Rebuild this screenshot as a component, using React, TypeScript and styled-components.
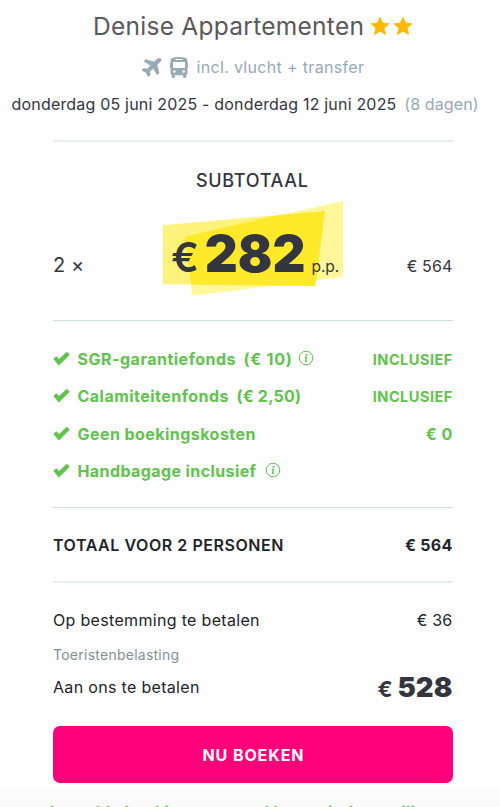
import React from 'react';
import styled, { createGlobalStyle } from 'styled-components';

const GlobalStyle = createGlobalStyle`
  * { box-sizing: border-box; }
  html, body { margin: 0; background: #fefefe; overflow: hidden; }
  body { font-family: Inter, sans-serif; font-size: 16px; color: #33363f; }
`;

const Page = styled.main`
  width: 500px;
  height: 807px;
  overflow: hidden;
  display: flex;
  flex-direction: column;
  background: linear-gradient(#fefefe 780px, #fafafa 807px);
  white-space: nowrap;
  > * { flex: none; }
`;

const Text = styled.span<{ $size?: number; $weight?: number; $track?: number; $color?: string }>`
  font-size: ${p => p.$size ?? 16}px;
  font-weight: ${p => p.$weight ?? 400};
  letter-spacing: ${p => p.$track ?? 0}px;
  margin-right: ${p => -(p.$track ?? 0)}px;
  color: ${p => p.$color ?? 'inherit'};
`;

const Title = styled.h1`
  display: flex;
  align-items: center;
  height: 52px;
  margin: 0;
  padding-left: 93px;
  gap: 6px;
  font-weight: 400;
  color: #5b585c;
`;

const Stars = styled.div`
  display: flex;
  gap: 3px;
  svg { display: block; }
`;

const Transport = styled.div`
  display: flex;
  align-items: center;
  height: 30px;
  padding-left: 141px;
  color: #98abb5;
  svg { display: block; flex: none; }
`;

const PlaneSlot = styled.span`
  width: 29px;
`;

const BusSlot = styled.span`
  width: 26.5px;
`;

const Dates = styled.div`
  display: flex;
  align-items: center;
  gap: 8px;
  height: 43px;
  padding-left: 11.5px;
`;

const Summary = styled.section`
  width: 400px;
  margin: 15px 0 0 53px;
  display: flex;
  flex-direction: column;
`;

const Divider = styled.hr<{ $soft?: boolean }>`
  width: 100%;
  border: 0;
  margin: 0;
  flex: none;
  height: ${p => (p.$soft ? 2 : 1)}px;
  background: ${p => (p.$soft ? '#e5eff4' : '#cde1e8')};
`;

const Subtotal = styled.h2`
  display: flex;
  align-items: center;
  height: 76px;
  margin: 0;
  padding-left: 143px;
  font-weight: 500;
`;

const PriceRow = styled.div`
  display: grid;
  grid-template-columns: 110px 180px 1fr;
  align-items: baseline;
  height: 102px;
  line-height: 72px;
`;

const Amount = styled.div`
  text-align: right;
  padding-right: 0.7px;
`;

const PriceTag = styled.div`
  position: relative;
  display: flex;
  align-items: baseline;
  padding-left: 8px;
`;

const Digits = styled.span`
  margin: 0 6px;
`;

const Marker = styled.svg`
  position: absolute;
  left: 0;
  top: -17px;
  z-index: -1;
`;

const PriceLayer = styled.div`
  position: relative;
  z-index: 0;
`;

const Benefits = styled.ul`
  list-style: none;
  margin: 0;
  padding: 19px 0 17px;
  color: #5fc34c;
`;

const Benefit = styled.li`
  display: flex;
  align-items: center;
  height: 37.5px;
  svg { display: block; flex: none; }
`;

const CheckSlot = styled.span`
  width: 24.5px;
`;

const Extra = styled.span`
  margin-left: 8px;
`;

const InfoSlot = styled.span<{ $gap: number }>`
  margin: -2px 0 0 ${p => p.$gap}px;
`;

const Row = styled.div<{ $height: number }>`
  display: flex;
  align-items: center;
  justify-content: space-between;
  height: ${p => p.$height}px;
  padding-right: 0.7px;
  color: #22242a;
`;

const End = styled.span`
  margin-left: auto;
  padding-right: 0.7px;
`;

const Payments = styled.div`
  padding-top: 21px;
`;

const Due = styled.span`
  display: flex;
  align-items: baseline;
  gap: 5px;
  color: #33363f;
`;

const BookButton = styled.button`
  width: 400px;
  height: 57px;
  margin: 26px 0 0 0;
  border: 0;
  border-radius: 7px;
  background: #ff007b;
  color: #fff;
  font-family: inherit;
`;

const Footnote = styled.p`
  margin: 19px 0 0;
  height: 20px;
  line-height: 20px;
  padding-left: 50px;
  color: #5fc34c;
`;

const Star = () => (
  <svg width="20" height="20" viewBox="0 0 24 24" fill="#fcb900" stroke="#fcb900" strokeWidth="1" strokeLinejoin="round">
    <path d="M12 1.6 15 8.5l7.7.8-5.7 5.2 1.6 7.6L12 18.2l-6.6 3.9L7 14.5 1.3 9.3 9 8.5z" />
  </svg>
);

const Plane = () => (
  <svg width="21" height="21" viewBox="0 0 21 21" fill="currentColor" stroke="currentColor" strokeWidth="0.6" strokeLinejoin="round">
    <path d="M20 2c-1.200-1.100-3-.6-4.100.4l-2.900 2.500-8.200-2.400L3 4.300l6.700 4.200-3.400 3.600-3.900-.5L.8 13.200l4.300 2.300 2.300 4.200 1.700-1.600-.4-3.700 3.500-3.200 4 6.600 1.900-1.800-2.200-8.200 2.900-2.700C20 4 20.500 2.800 20 2z" />
  </svg>
);

const Bus = () => (
  <svg width="18" height="21" viewBox="0 0 18 21" fill="currentColor" fillRule="evenodd">
    <path d="M9 0C4 0 .5 1 .5 3.800V16c0 1.100.5 1.700 1.200 2v1.800c0 .7.500 1.200 1.200 1.200h.8c.7 0 1.200-.5 1.200-1.200v-1.600h8.200v1.600c0 .7.500 1.200 1.200 1.200h.8c.7 0 1.200-.5 1.200-1.200V18c.7-.3 1.200-.9 1.200-2V3.800C17.500 1 14 0 9 0zM5.500 1.900h7v1h-7zM3 5h12v6H3zM4.400 13.200a1.300 1.300 0 1 1 0 2.600 1.300 1.300 0 0 1 0-2.600zm9.200 0a1.300 1.300 0 1 1 0 2.600 1.300 1.300 0 0 1 0-2.600zM0 6h.5v5H0zM17.500 6h.5v5h-.5z" />
  </svg>
);

const Check = () => (
  <svg width="17" height="16" viewBox="0 0 17 16" fill="currentColor">
    <path d="M.3 8 3.300 5.200l2.800 2.900L13.800.7 16.800 3.700 5.900 14.400z" />
  </svg>
);

const Info = () => (
  <svg width="16" height="16" viewBox="0 0 16 16" fill="none" stroke="currentColor">
    <circle cx="8" cy="8" r="6.800" strokeWidth="1" />
    <circle cx="8.500" cy="4.900" r="1" fill="currentColor" stroke="none" />
    <path d="M6.700 7.300h1.700l-.9 3.800h1.700" strokeWidth="1.300" />
  </svg>
);

interface BenefitItem {
  label: string;
  track: number;
  extra?: string;
  extraTrack?: number;
  infoGap?: number;
  value?: string;
  valueSize?: number;
}

const benefits: BenefitItem[] = [
  { label: 'SGR-garantiefonds', track: 0.5, extra: '(€ 10)', extraTrack: 0.75, infoGap: 6.5, value: 'INCLUSIEF', valueSize: 14.5 },
  { label: 'Calamiteitenfonds', track: 0.48, extra: '(€ 2,50)', extraTrack: 0.2, value: 'INCLUSIEF', valueSize: 14.5 },
  { label: 'Geen boekingskosten', track: 0.45, value: '€ 0', valueSize: 16 },
  { label: 'Handbagage inclusief', track: 0.4, infoGap: 9.5 },
];

export default function App() {
  return (
    <Page>
      <GlobalStyle />
      <Title>
        <Text $size={24.5} $track={0.27}>Denise Appartementen</Text>
        <Stars><Star /><Star /></Stars>
      </Title>
      <Transport>
        <PlaneSlot><Plane /></PlaneSlot>
        <BusSlot><Bus /></BusSlot>
        <Text $track={0.33} $color="#94aab8">incl. vlucht + transfer</Text>
      </Transport>
      <Dates>
        <Text $track={0.19}>donderdag 05 juni 2025 - donderdag 12 juni 2025</Text>
        <Text $track={0.1} $color="#94aab8">(8 dagen)</Text>
      </Dates>
      <Summary>
        <Divider $soft />
        <Subtotal><Text $size={18} $weight={500} $track={0.7}>SUBTOTAAL</Text></Subtotal>
        <PriceLayer>
          <PriceRow>
            <Text $size={20} $track={0.1}>2 ×</Text>
            <PriceTag>
              <Marker width="180" height="95" viewBox="0 0 180 95">
                <path d="M0 24.300 162 10 152 85 0 83.300z" fill="#fdf27a" />
                <path d="M21.500 35.700 180 0v75.700L29.300 94.700z" fill="#fff79a" />
                <path d="M21.500 35.700 113.900 14.250 162 10 153.300 79.100 152 85 106.300 84.500 28.200 83.600z" fill="#ffe92b" />
              </Marker>
              <Text $size={41} $weight={600}>€</Text>
              <Digits><Text $size={51} $weight={900}>282</Text></Digits>
              <Text $size={15.5}>p.p.</Text>
            </PriceTag>
            <Amount><Text $track={0.1}>€ 564</Text></Amount>
          </PriceRow>
        </PriceLayer>
        <Divider />
        <Benefits>
          {benefits.map(b => (
            <Benefit key={b.label}>
              <CheckSlot><Check /></CheckSlot>
              <Text $weight={700} $track={b.track}>{b.label}</Text>
              {b.extra && <Extra><Text $weight={700} $track={b.extraTrack}>{b.extra}</Text></Extra>}
              {b.infoGap && <InfoSlot $gap={b.infoGap}><Info /></InfoSlot>}
              {b.value && <End><Text $size={b.valueSize} $weight={700} $track={0.5}>{b.value}</Text></End>}
            </Benefit>
          ))}
        </Benefits>
        <Divider />
        <Row $height={73}>
          <Text $weight={600} $track={0.55}>TOTAAL VOOR 2 PERSONEN</Text>
          <Text $weight={700} $track={0.3}>€ 564</Text>
        </Row>
        <Divider $soft />
        <Payments>
          <Row $height={31}>
            <Text $track={0.32}>Op bestemming te betalen</Text>
            <Text $track={0.2}>€ 36</Text>
          </Row>
          <Row $height={39}>
            <Text $size={14} $track={0.25} $color="#849097">Toeristenbelasting</Text>
          </Row>
          <Row $height={26}>
            <Text $track={0.32}>Aan ons te betalen</Text>
            <Due>
              <Text $size={22} $weight={700}>€</Text>
              <Text $size={27.5} $weight={900}>528</Text>
            </Due>
          </Row>
        </Payments>
        <BookButton><Text $weight={700} $track={0.9}>NU BOEKEN</Text></BookButton>
      </Summary>
      <Footnote><Text $weight={700} $track={0.3}>betaalde boeking omgaand bevestigd en veilig</Text></Footnote>
    </Page>
  );
}
